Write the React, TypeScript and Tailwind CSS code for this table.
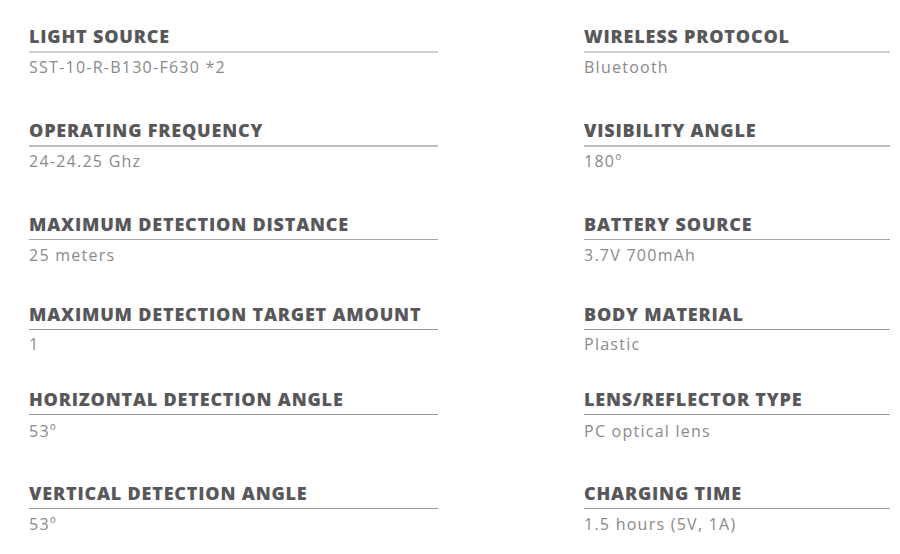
const left = [
  { label: "LIGHT SOURCE", value: "SST-10-R-B130-F630 *2" },
  { label: "OPERATING FREQUENCY", value: "24-24.25 Ghz" },
  { label: "MAXIMUM DETECTION DISTANCE", value: "25 meters" },
  { label: "MAXIMUM DETECTION TARGET AMOUNT", value: "1" },
  { label: "HORIZONTAL DETECTION ANGLE", value: "53º" },
  { label: "VERTICAL DETECTION ANGLE", value: "53º" },
];

const right = [
  { label: "WIRELESS PROTOCOL", value: "Bluetooth" },
  { label: "VISIBILITY ANGLE", value: "180º" },
  { label: "BATTERY SOURCE", value: "3.7V 700mAh" },
  { label: "BODY MATERIAL", value: "Plastic" },
  { label: "LENS/REFLECTOR TYPE", value: "PC optical lens" },
  { label: "CHARGING TIME", value: "1.5 hours (5V, 1A)" },
];

// spacing before each row, matches the uneven rhythm of the original
const rowGap = ["mt-[23px]", "mt-[39px]", "mt-[39px]", "mt-[35px]", "mt-[31px]", "mt-[38px]"];
const valueGap = ["mt-[3px]", "mt-[3px]", "mt-[4px]", "mt-[3px]", "mt-[5px]", "mt-[4px]"];
const lineStyle = [
  "border-b-2 border-[#d0d0d0]",
  "border-b-2 border-[#bdbdbd]",
  "border-b border-[#a8a8a8]",
  "border-b border-[#9a9a9a]",
  "border-b border-[#9a9a9a]",
  "border-b border-[#9a9a9a]",
];

function Spec({ label, value, i }: { label: string; value: string; i: number }) {
  return (
    <div className={rowGap[i]}>
      <div className={`pb-[2px] ${lineStyle[i]}`}>
        <h3 className="text-[18px] leading-[26px] font-extrabold text-[#58585a] tracking-[0.8px] whitespace-nowrap">
          {label}
        </h3>
      </div>
      <p className={`${valueGap[i]} text-[16px] leading-[22px] text-[#8a8a8a] tracking-[1.25px]`}>{value}</p>
    </div>
  );
}

export default function App() {
  return (
    <div className="w-[900px] h-[554px] bg-white font-['Open_Sans',sans-serif] overflow-hidden">
      <div className="flex pl-[29px] gap-[146px]">
        <div className="w-[409px] flex flex-col">
          {left.map((s, i) => (
            <Spec key={s.label} {...s} i={i} />
          ))}
        </div>
        <div className="w-[306px] flex flex-col">
          {right.map((s, i) => (
            <Spec key={s.label} {...s} i={i} />
          ))}
        </div>
      </div>
    </div>
  );
}
